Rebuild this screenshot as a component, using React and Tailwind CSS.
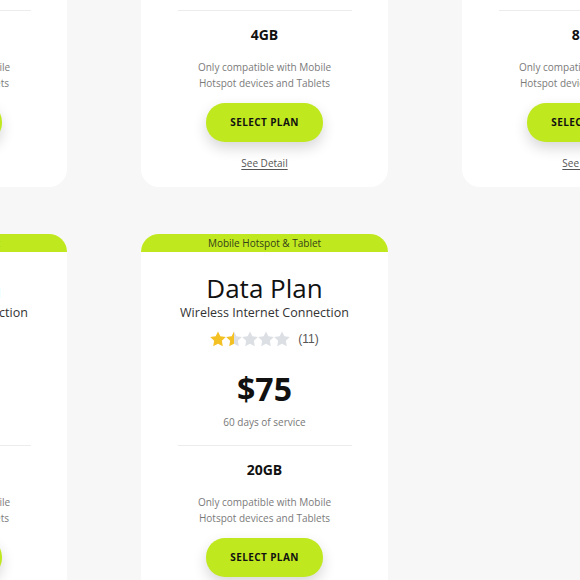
import React from "react";

function Star({ fill }) {
  const id = React.useId().replace(/:/g, "");
  return (
    <svg width="16" height="16" viewBox="0 0 24 24" className="block">
      <defs>
        <linearGradient id={id} x1="0" x2="1" y1="0" y2="0">
          <stop offset={fill * 100 + "%"} stopColor="#f4c125" />
          <stop offset={fill * 100 + "%"} stopColor="#dcdfe4" />
        </linearGradient>
      </defs>
      <path
        d="M12 0.6l3.6 7.4 8.1 1.1-5.9 5.7 1.4 8.1L12 19.1l-7.2 3.8 1.4-8.1-5.9-5.7 8.1-1.1z"
        fill={`url(#${id})`}
      />
    </svg>
  );
}

function Card({ gb, price = "$75", badge = "Mobile Hotspot & Tablet" }) {
  return (
    <div className="flex h-[388px] w-[247px] flex-col items-center rounded-[18px] bg-white">
      <div className="flex h-[18px] w-full items-center justify-center rounded-t-[18px] bg-[#c0e81e] text-[10px] leading-[18px] text-[#33401a]">
        {badge}
      </div>
      <div className="mt-[20px] text-[26px] leading-[32px] text-[#111]">Data Plan</div>
      <div className="text-[12.5px] leading-[18px] text-[#333]">Wireless Internet Connection</div>
      <div className="mt-[9px] flex h-[16px] items-center">
        <div className="flex">
          <Star fill={1} />
          <Star fill={0.5} />
          <Star fill={0} />
          <Star fill={0} />
          <Star fill={0} />
        </div>
        <span className="ml-[8px] font-['Liberation_Sans',sans-serif] text-[12px] text-[#555]">(11)</span>
      </div>
      <div className="mt-[22px] text-[32px] font-bold leading-[40px] text-[#111]">{price}</div>
      <div className="mt-[5px] text-[10px] leading-[16px] text-[#777]">60 days of service</div>
      <div className="mt-[15px] h-px w-[174px] bg-[#ececec]" />
      <div className="mt-[14px] text-[14px] font-bold leading-[20px] text-[#111]">{gb}</div>
      <div className="mt-[14px] text-center text-[10px] leading-[16px] text-[#7a7a7a]">
        Only compatible with Mobile
        <br />
        Hotspot devices and Tablets
      </div>
      <button className="mt-[12px] flex h-[39px] w-[117px] items-center justify-center rounded-[19px] bg-[#c0e81e] text-[10px] font-bold tracking-[0.04em] text-[#111] shadow-[0_6px_14px_rgba(0,0,0,0.16)]">
        SELECT PLAN
      </button>
      <a className="mt-[13px] text-[10px] leading-[16px] text-[#555] underline underline-offset-2">
        See Detail
      </a>
    </div>
  );
}

export default function App() {
  return (
    <div className="h-[580px] w-[580px] overflow-hidden bg-[#f7f7f7] font-['Open_Sans',sans-serif]">
      <div className="-ml-[180px] -mt-[201px] grid grid-cols-[247px_247px_247px] gap-x-[74px] gap-y-[47px]">
        <Card gb="2GB" price="$35" />
        <Card gb="4GB" price="$45" />
        <Card gb="8GB" price="$55" />
        <Card gb="10GB" price="$65" />
        <Card gb="20GB" price="$75" />
      </div>
    </div>
  );
}
